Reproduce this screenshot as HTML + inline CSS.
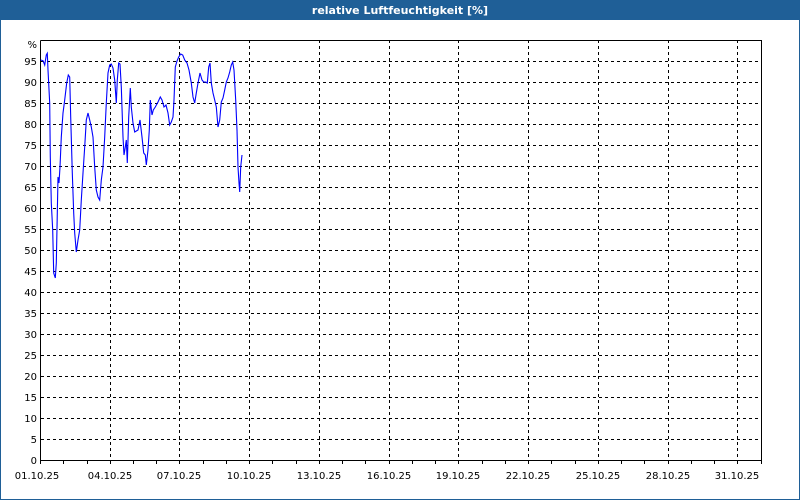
<!DOCTYPE html>
<html><head><meta charset="utf-8"><style>
html,body{margin:0;padding:0;}
body{width:800px;height:500px;overflow:hidden;background:#fff;font-family:"DejaVu Sans","Liberation Sans",sans-serif;}
</style></head><body>
<svg width="800" height="500" xmlns="http://www.w3.org/2000/svg" style="display:block">
<rect x="0" y="0" width="800" height="500" fill="#1f5f97"/>
<rect x="1" y="20" width="798" height="479" fill="#fff"/>
<text x="400" y="14" fill="#fff" font-size="11" font-weight="bold" text-anchor="middle" font-family="DejaVu Sans, sans-serif">relative Luftfeuchtigkeit [%]</text>
<g stroke="#000" stroke-width="1" stroke-dasharray="3,3" shape-rendering="crispEdges">
<line x1="41" x2="761" y1="61.5" y2="61.5"/><line x1="41" x2="761" y1="82.5" y2="82.5"/><line x1="41" x2="761" y1="103.5" y2="103.5"/><line x1="41" x2="761" y1="124.5" y2="124.5"/><line x1="41" x2="761" y1="145.5" y2="145.5"/><line x1="41" x2="761" y1="166.5" y2="166.5"/><line x1="41" x2="761" y1="187.5" y2="187.5"/><line x1="41" x2="761" y1="208.5" y2="208.5"/><line x1="41" x2="761" y1="229.5" y2="229.5"/><line x1="41" x2="761" y1="250.5" y2="250.5"/><line x1="41" x2="761" y1="271.5" y2="271.5"/><line x1="41" x2="761" y1="292.5" y2="292.5"/><line x1="41" x2="761" y1="313.5" y2="313.5"/><line x1="41" x2="761" y1="334.5" y2="334.5"/><line x1="41" x2="761" y1="355.5" y2="355.5"/><line x1="41" x2="761" y1="376.5" y2="376.5"/><line x1="41" x2="761" y1="397.5" y2="397.5"/><line x1="41" x2="761" y1="418.5" y2="418.5"/><line x1="41" x2="761" y1="439.5" y2="439.5"/>
<line x1="110.5" x2="110.5" y1="40" y2="460"/><line x1="179.5" x2="179.5" y1="40" y2="460"/><line x1="249.5" x2="249.5" y1="40" y2="460"/><line x1="319.5" x2="319.5" y1="40" y2="460"/><line x1="389.5" x2="389.5" y1="40" y2="460"/><line x1="458.5" x2="458.5" y1="40" y2="460"/><line x1="528.5" x2="528.5" y1="40" y2="460"/><line x1="598.5" x2="598.5" y1="40" y2="460"/><line x1="668.5" x2="668.5" y1="40" y2="460"/><line x1="737.5" x2="737.5" y1="40" y2="460"/>
</g>
<g stroke="#000" stroke-width="1" fill="none" shape-rendering="crispEdges">
<polyline points="40.5,40.5 761.5,40.5 761.5,460.5 40.5,460.5 40.5,40.5"/>
<path d="M63.5,460v4M87.5,460v4M110.5,460v4M133.5,460v4M156.5,460v4M179.5,460v4M203.5,460v4M226.5,460v4M249.5,460v4M272.5,460v4M296.5,460v4M319.5,460v4M342.5,460v4M365.5,460v4M389.5,460v4M412.5,460v4M435.5,460v4M458.5,460v4M482.5,460v4M505.5,460v4M528.5,460v4M551.5,460v4M575.5,460v4M598.5,460v4M621.5,460v4M644.5,460v4M668.5,460v4M691.5,460v4M714.5,460v4M737.5,460v4M761.5,460v4M40.5,460v4"/>
</g>
<g font-size="10" fill="#000" text-anchor="end">
<text x="37" y="48">%</text><text x="37" y="65">95</text><text x="37" y="86">90</text><text x="37" y="107">85</text><text x="37" y="128">80</text><text x="37" y="149">75</text><text x="37" y="170">70</text><text x="37" y="191">65</text><text x="37" y="212">60</text><text x="37" y="233">55</text><text x="37" y="254">50</text><text x="37" y="275">45</text><text x="37" y="296">40</text><text x="37" y="317">35</text><text x="37" y="338">30</text><text x="37" y="359">25</text><text x="37" y="380">20</text><text x="37" y="401">15</text><text x="37" y="422">10</text><text x="37" y="443">5</text><text x="37" y="464">0</text>
</g>
<g font-size="10" fill="#000" text-anchor="middle">
<text x="37" y="479">01.10.25</text><text x="110" y="479">04.10.25</text><text x="179" y="479">07.10.25</text><text x="249" y="479">10.10.25</text><text x="319" y="479">13.10.25</text><text x="389" y="479">16.10.25</text><text x="458" y="479">19.10.25</text><text x="528" y="479">22.10.25</text><text x="598" y="479">25.10.25</text><text x="668" y="479">28.10.25</text><text x="737" y="479">31.10.25</text>
</g>
<polyline fill="none" stroke="#0000ff" stroke-width="1.1" points="40.7,60 43,60.7 44.7,65 46.3,55 47.3,53.3 48,70 49.7,103 50.3,157 51.3,203 52.7,230 53.7,273 55.3,278 56.3,263 57.3,213 58,177 59,183 60,167 61.3,137 63,113 64.7,100 66.7,83 68.3,75 69.7,77 70.7,117 72.3,173 73.7,213 74.7,233 76.3,252 78,240 79.7,230 81.3,200 83,173 84.7,147 86.3,120 88,113 89.7,120 91.3,127 93,137 94.7,167 96.3,190 98,197 99.7,200 101.3,180 103,167 104.7,137 106.3,103 108,73 109.7,65 111.3,64 113,68 114.7,80 116.3,103 117.3,80 118.7,63 120,64 121.3,87 123,137 124,155 125.3,147 126.3,140 127.3,163 128.7,117 130.3,88 131.3,107 133,123 134.7,132 138,130 140,120 142,137 143.7,153 145.3,155 146.3,165 148,150 149.3,130 150.3,100 152,115 153.3,110 155.3,107 158,102 160.3,97 162,100 164,107 166,105 168,113 169.7,125 171.3,122 173,117 174,100 175.3,67 177,61 178.7,57 180.7,54 182.7,55 184.7,60 187,63 189,70 191.3,83 193,97 194.7,103 196.3,93 198,83 200,73 202,80 203.7,82 205.7,82 207.3,83 208.7,67 210,63 211.3,83 213,93 214.7,100 216.3,107 218,127 219.7,120 221.3,102 223,98 224.7,90 226.3,82 228,78 229.7,72 231.3,65 232.7,62 234,70 235.7,100 237,130 238,167 239,183 239.7,192 240.7,167 242,155"/>
</svg>
</body></html>
